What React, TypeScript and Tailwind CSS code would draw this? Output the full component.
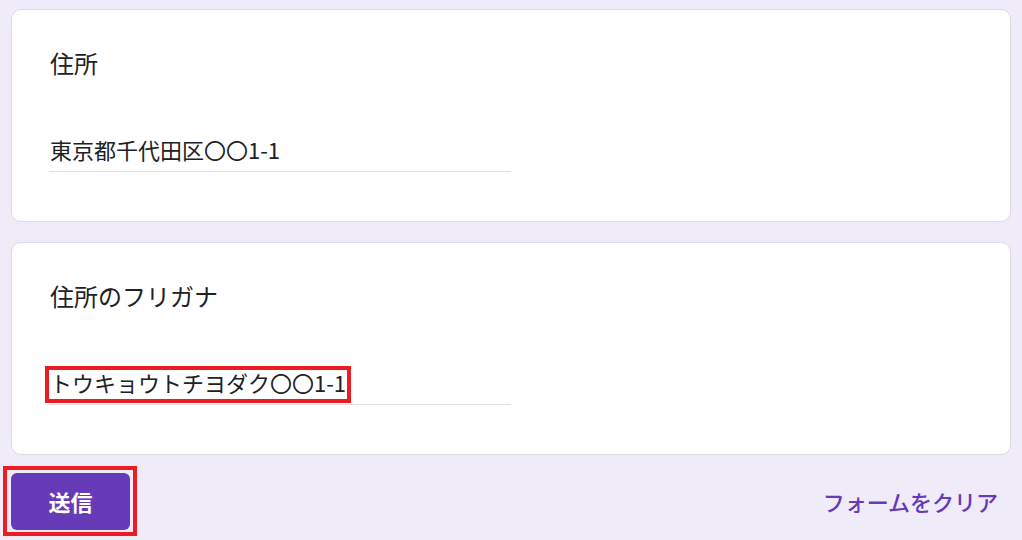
const FONT = "font-['Noto_Sans_CJK_JP','Noto_Sans',sans-serif]"

function QuestionCard({
  title,
  answer,
  marked = false,
}: {
  title: string
  answer: string
  marked?: boolean
}) {
  return (
    <div className="h-[213px] rounded-[10px] border border-[#dadce0] bg-white pl-[37px] pt-[37px]">
      <div className="text-[24px] leading-[32px] text-[#202124] pl-[1px]">{title}</div>
      <div className="relative mt-[55px] w-[462px] border-b border-[#e0e0e0] pb-[7px]">
        <div className="text-[22px] leading-[30px] text-[#202124] pl-[1px]">{answer}</div>
        {marked && (
          <span className="absolute -left-[4px] -top-[1px] bottom-[1px] w-[306px] border-4 border-[#ec1c24]" />
        )}
      </div>
    </div>
  )
}

export default function App() {
  return (
    <div className={`min-h-[540px] bg-[#efebf8] px-[11px] pt-[9px] ${FONT}`}>
      <div className="flex w-[1000px] flex-col gap-[20px]">
        <QuestionCard title="住所" answer="東京都千代田区〇〇1-1" />
        <QuestionCard title="住所のフリガナ" answer="トウキョウトチヨダク〇〇1-1" marked />
      </div>
      <div className="mt-[18px] flex w-[1000px] items-center justify-between">
        <div className="relative">
          <button className="flex h-[57px] w-[119px] items-center justify-center rounded-[6px] bg-[#673ab7] text-[22px] font-bold text-white">
            送信
          </button>
          <span className="absolute -left-[8px] -top-[7px] -right-[7px] -bottom-[6px] border-4 border-[#ec1c24]" />
        </div>
        <button className="pr-[13px] text-[22px] font-medium text-[#673ab7]">
          フォームをクリア
        </button>
      </div>
    </div>
  )
}
